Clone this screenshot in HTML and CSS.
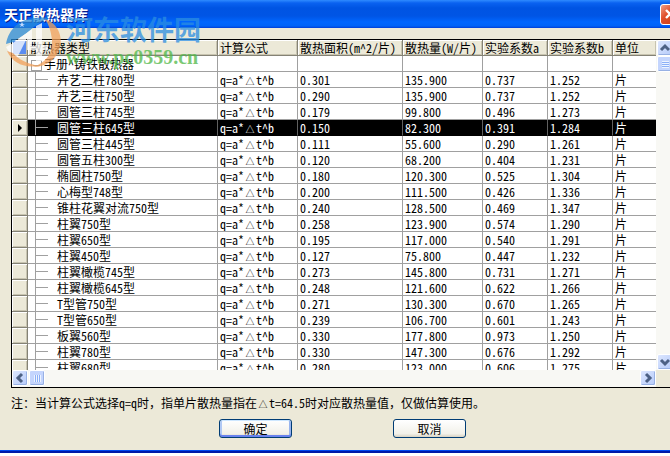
FILE: index.html
```html
<!DOCTYPE html>
<html lang="zh-CN">
<head>
    <meta charset="UTF-8">
    <meta name="viewport" content="width=device-width, initial-scale=1.0">
    <title>天正散热器库</title>
    <link rel="stylesheet" href="styles.css">
</head>
<body>
    <div class="window">
        <header class="titlebar">
            <h1>天正散热器库</h1>
            <button class="close" type="button" aria-label="关闭">
                <svg width="18" height="18" viewBox="0 0 18 18"><path d="M5 5l8 8M13 5l-8 8" stroke="#fff" stroke-width="2.4"/></svg>
            </button>
        </header>

        <main class="client">
            <div class="grid">
                <div class="rows">
                    <table>
                        <colgroup>
                            <col class="col-mark"><col class="col-type"><col class="col-formula"><col class="col-area">
                            <col class="col-heat"><col class="col-coef"><col class="col-coef"><col class="col-unit">
                        </colgroup>
                        <thead>
                            <tr>
                                <th class="corner"></th><th>散热器类型</th><th>计算公式</th><th>散热面积(m^2/片)</th>
                                <th>散热量(W/片)</th><th>实验系数a</th><th>实验系数b</th><th>单位</th>
                            </tr>
                        </thead>
                        <tbody id="list">
                            <tr class="group">
                                <td class="mark"></td><td class="root"><button class="toggle" type="button" aria-label="折叠"></button>手册^铸铁散热器</td>
                                <td></td><td></td><td></td><td></td><td></td><td></td>
                            </tr>
                        </tbody>
                    </table>
                </div>
                <div class="vscroll">
                    <button type="button" aria-label="向上"><svg width="16" height="16" viewBox="0 0 16 16"><path d="M4 10l4-4 4 4"/></svg></button>
                    <span class="thumb"></span>
                    <button class="last" type="button" aria-label="向下"><svg width="16" height="16" viewBox="0 0 16 16"><path d="M4 6l4 4 4-4"/></svg></button>
                </div>
                <div class="hscroll">
                    <button type="button" aria-label="向左"><svg width="16" height="16" viewBox="0 0 16 16"><path d="M10 4l-4 4 4 4"/></svg></button>
                    <span class="thumb"></span>
                    <button class="last" type="button" aria-label="向右"><svg width="16" height="16" viewBox="0 0 16 16"><path d="M6 4l4 4-4 4"/></svg></button>
                </div>
            </div>

            <p class="note">注：当计算公式选择<span class="half">q=q</span>时，指单片散热量指在<span class="delta">△</span><span class="half">t=64.5</span>时对应散热量值，仅做估算使用。</p>

            <div class="actions">
                <button class="ok" type="button">确定</button>
                <button type="button">取消</button>
            </div>
        </main>

        <div class="watermark">
            <svg width="58" height="56" viewBox="0 0 58 56">
                <path d="M1 31C4 14 18 2 43 5L30 13L22 20L8 29Z" fill="#2b8bd6"/>
                <path d="M40 6C52 10 58 22 55 34C52 46 42 54 28 54C42 49 48 40 47 27C46 18 44 12 40 6Z" fill="#f2a05a"/>
                <path d="M1 34L8 30L27 16V33H31V13L37 10V32H43V37H37V48H31V37H22V25L12 45C6 42 3 38 1 34Z" fill="#fff"/>
                <path d="M2 38C8 51 20 55 33 53C22 50 14 47 8 40Z" fill="#f2a05a"/>
                <path d="M17 9l1 2h2l-2 1 1 2-2-1-2 1 1-2-2-1h2z" fill="#fff"/>
            </svg>
            <div class="watermark-text">
                <span class="site">河东软件园</span>
                <span class="url">www.pc0359.cn</span>
            </div>
        </div>
    </div>

    <script src="script.js"></script>
</body>
</html>
```
FILE: styles.css
```css
* {
    box-sizing: border-box;
}
body, html {
    margin: 0;
    padding: 0;
    height: 100%;
    overflow: hidden;
    background-color: #fff;
    color: #000;
    font-family: "Noto Sans CJK SC", sans-serif;
    font-size: 12px;
}
button {
    padding: 0;
    font: inherit;
}
table, .half {
    font-feature-settings: "hwid";
}
.delta {
    display: inline-block;
    width: 12px;
    font-size: 9px;
    line-height: 10px;
    text-align: center;
}
.window {
    position: relative;
    display: flex;
    flex-direction: column;
    height: calc(100% - 3px);
    background-color: #ece9d8;
    border-bottom: 2px solid #0019a8;
}
.titlebar {
    display: flex;
    flex: none;
    align-items: center;
    justify-content: space-between;
    height: 28px;
    padding-left: 4px;
    overflow: hidden;
    background: linear-gradient(#2f8bff 0, #0a62f0 3px, #0054e3 8px, #0055e5 16px, #0066ff 22px, #0063f8 26px, #003dd7 28px);
}
.titlebar h1 {
    margin: 0;
    font-size: 14px;
    font-weight: bold;
    color: #fff;
    text-shadow: 1px 1px #0a1883;
}
.close {
    flex: none;
    width: 20px;
    height: 21px;
    margin-right: -10px;
    border: 1px solid #fff;
    border-radius: 3px;
    background: linear-gradient(135deg, #f0a088, #e0502c 40%, #c83a12);
}
.close svg {
    display: block;
}
.client {
    display: flex;
    flex: 1;
    flex-direction: column;
    min-height: 0;
    padding: 11px 0 12px 11px;
    border-bottom: 1px solid #0048f0;
}
.grid {
    display: grid;
    flex: 1;
    grid-template-columns: 1fr 14px;
    grid-template-rows: 1fr 17px;
    min-height: 0;
    border: 1px solid #000;
    border-right: 0;
}
.rows {
    min-width: 0;
    overflow: hidden;
    background-color: #fff;
}
table {
    width: 100%;
    table-layout: fixed;
    border-collapse: separate;
    border-spacing: 0;
}
.col-mark { width: 16px; }
.col-type { width: 190px; }
.col-formula { width: 80px; }
.col-area { width: 105px; }
.col-heat { width: 80px; }
.col-coef { width: 65px; }
th, td {
    height: 16px;
    padding: 0 0 0 2px;
    line-height: 15px;
    text-align: left;
    font-weight: normal;
    white-space: nowrap;
    overflow: hidden;
    border-right: 1px solid #a0a0a0;
    border-bottom: 1px solid #a0a0a0;
}
td:last-child, th:last-child {
    border-right: 0;
}
th, .mark {
    background-color: #ece9d8;
    border-color: #848275;
    box-shadow: inset 1px 1px #fff, inset -1px -1px #c8c4b0;
}
th.corner {
    background-color: #5a8cf0;
}
.root {
    padding-left: 0;
}
.toggle {
    width: 11px;
    height: 11px;
    margin: 0 2px 0 3px;
    vertical-align: -1px;
    border: 1px solid #a0a0a0;
    background: linear-gradient(#a0a0a0, #a0a0a0) center / 7px 1px no-repeat #fff;
}
.item {
    padding-left: 29px;
    background: linear-gradient(#a0a0a0, #a0a0a0) 7px 0 / 1px 100% no-repeat,
        linear-gradient(#a0a0a0, #a0a0a0) 8px 7px / 12px 1px no-repeat;
}
.selected td:not(.mark) {
    background-color: #000;
    color: #fff;
    border-color: #000;
}
.selected td:not(.mark, :last-child) {
    border-right-color: #606060;
}
.selected .mark::before {
    content: "";
    display: block;
    margin-left: 4px;
    width: 0;
    border: 4px solid transparent;
    border-left-color: #000;
    border-right: 0;
}
.vscroll, .hscroll {
    display: flex;
    overflow: hidden;
    background-color: #f8f8f4;
}
.vscroll {
    flex-direction: column;
    padding-left: 1px;
}
.hscroll {
    gap: 1px;
}
.vscroll button, .hscroll button, .thumb {
    flex: none;
    width: 16px;
    height: 16px;
    border: 1px solid #fff;
    border-radius: 2px;
    background: linear-gradient(135deg, #dce6fe, #b6cbfa);
    box-shadow: inset -1px -1px #98b1e4;
}
.vscroll svg, .hscroll svg {
    display: block;
    margin: -1px;
    fill: none;
    stroke: #4d6185;
    stroke-width: 3;
}
.vscroll .last {
    margin-top: auto;
}
.hscroll .last {
    margin-left: auto;
}
.vscroll .thumb {
    background: repeating-linear-gradient(#eef4fe 0 1px, #8cb0f8 1px 2px) 4px 4px / 7px 7px no-repeat, #c4d5fd;
}
.hscroll .thumb {
    background: repeating-linear-gradient(90deg, #eef4fe 0 1px, #8cb0f8 1px 2px) 4px 4px / 7px 7px no-repeat, #c4d5fd;
}
.note {
    margin: 5px 0 6px;
    line-height: 20px;
    white-space: nowrap;
}
.actions {
    display: flex;
    gap: 101px;
    justify-content: center;
    padding-left: 4px;
}
.actions button {
    width: 73px;
    height: 19px;
    line-height: 15px;
    border: 1px solid #003c74;
    border-radius: 3px;
    background: linear-gradient(#fff, #f2f1ea 80%, #d8d2c2);
}
.actions .ok {
    box-shadow: inset 0 1px #cee7ff, inset 0 -2px #6982ee, inset 2px 0 #b0c8f4, inset -2px 0 #98b4ee;
}
/* site logo laid over the window */
.watermark {
    position: absolute;
    top: 13px;
    left: 5px;
    display: flex;
    gap: 3px;
    opacity: 0.75;
    pointer-events: none;
}
.watermark-text {
    display: flex;
    flex-direction: column;
}
.site {
    font-size: 27px;
    line-height: 32px;
    font-weight: bold;
    color: #2b8de0;
}
.url {
    font: bold 20px/24px "Liberation Serif", serif;
    color: #4fb848;
}
```
FILE: script.js
```js
const radiators = [
    ["卉艺二柱780型", "0.301", "135.900", "0.737", "1.252"],
    ["卉艺三柱750型", "0.290", "135.900", "0.737", "1.252"],
    ["圆管三柱745型", "0.179", "99.800", "0.496", "1.273"],
    ["圆管三柱645型", "0.150", "82.300", "0.391", "1.284"],
    ["圆管三柱445型", "0.111", "55.600", "0.290", "1.261"],
    ["圆管五柱300型", "0.120", "68.200", "0.404", "1.231"],
    ["椭圆柱750型", "0.180", "120.300", "0.525", "1.304"],
    ["心梅型748型", "0.200", "111.500", "0.426", "1.336"],
    ["锥柱花翼对流750型", "0.240", "128.500", "0.469", "1.347"],
    ["柱翼750型", "0.258", "123.900", "0.574", "1.290"],
    ["柱翼650型", "0.195", "117.000", "0.540", "1.291"],
    ["柱翼450型", "0.127", "75.800", "0.447", "1.232"],
    ["柱翼橄榄745型", "0.273", "145.800", "0.731", "1.271"],
    ["柱翼橄榄645型", "0.248", "121.600", "0.622", "1.266"],
    ["T型管750型", "0.271", "130.300", "0.670", "1.265"],
    ["T型管650型", "0.239", "106.700", "0.601", "1.243"],
    ["板翼560型", "0.330", "177.800", "0.973", "1.250"],
    ["柱翼780型", "0.330", "147.300", "0.676", "1.292"],
    ["柱翼680型", "0.280", "123.000", "0.606", "1.275"]
];
const formula = 'q=a*<span class="delta">△</span>t^b';
const selected = 3;

function createRows() {
    const list = document.getElementById('list');
    radiators.forEach(([name, ...values], i) => {
        const row = list.insertRow();
        if (i === selected) {
            row.classList.add('selected');
        }
        row.insertCell().className = 'mark';
        [name, formula, ...values, '片'].forEach((text, n) => {
            const cell = row.insertCell();
            cell.innerHTML = text;
            if (n === 0) cell.className = 'item';
        });
    });
}

createRows();
```
